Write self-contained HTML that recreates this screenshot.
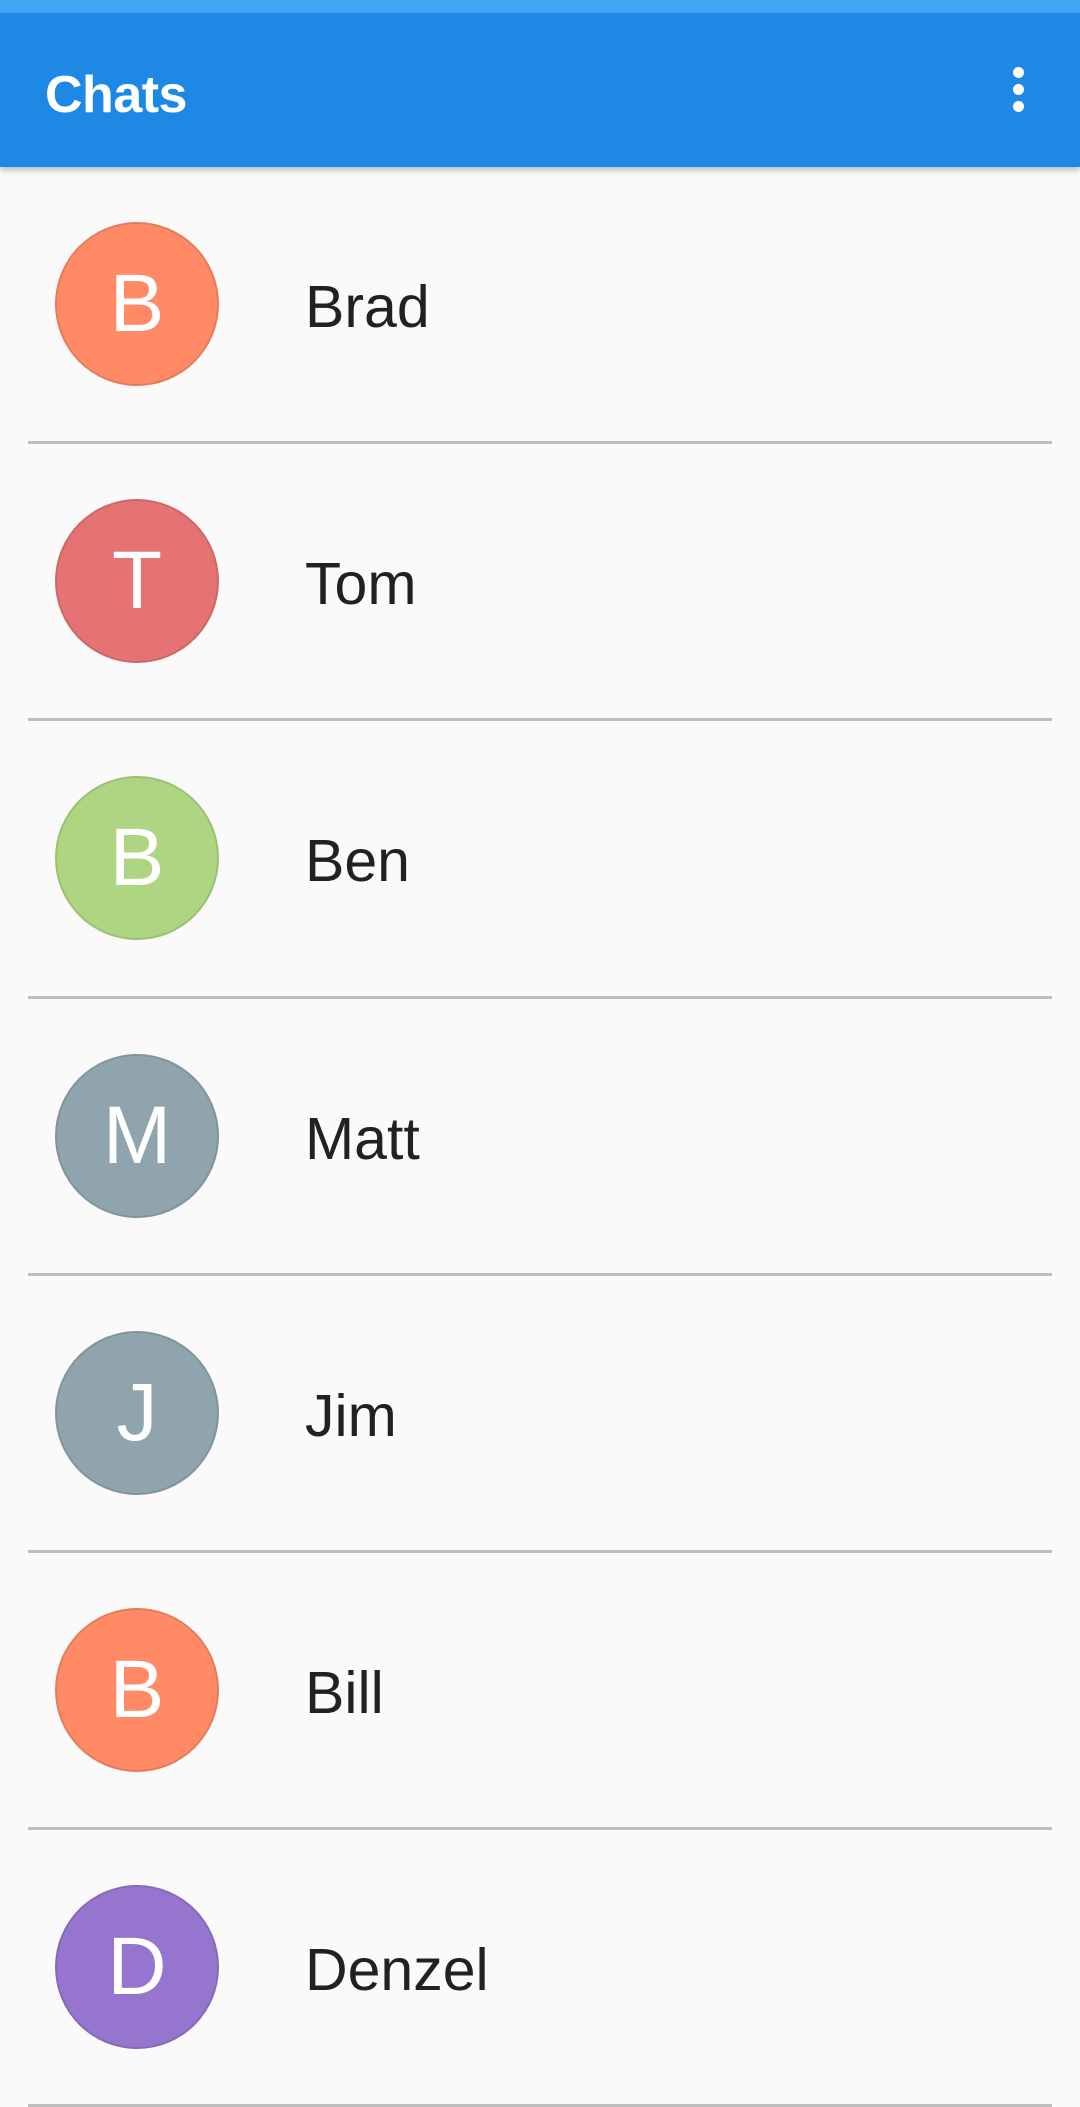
<!DOCTYPE html>
<html><head><meta charset="utf-8"><style>
*{margin:0;padding:0;box-sizing:border-box}
body{width:1080px;height:2107px;background:#fafafa;font-family:"Liberation Sans",sans-serif;overflow:hidden;position:relative}
.status{position:absolute;left:0;top:0;width:1080px;height:13px;background:#42a5f5}
.bar{position:absolute;left:0;top:13px;width:1080px;height:154px;background:#1e88e5;box-shadow:0 3px 6px rgba(0,0,0,0.25);z-index:2}
.title{position:absolute;left:45px;top:52px;color:#fff;font-size:52px;font-weight:bold;line-height:60px;letter-spacing:-0.5px}
.dot{position:absolute;left:1013px;width:11px;height:11px;border-radius:50%;background:#fff}
.list{position:absolute;left:0;top:167px;width:1080px}
.row{position:relative;height:277.2px}
.av{position:absolute;left:55px;top:55px;width:164px;height:164px;border-radius:50%;border:2px solid rgba(0,0,0,0.1);color:#fff;font-size:82px;text-align:center;line-height:160px;font-weight:normal}
.name{position:absolute;left:305px;top:105px;font-size:59px;line-height:70px;color:#212121}
.div{position:absolute;left:28px;right:28px;bottom:0;height:3px;background:#bdbdbd}
</style></head><body>
<div class="status"></div>
<div class="bar"><div class="title">Chats</div>
<div class="dot" style="top:54px"></div><div class="dot" style="top:71px"></div><div class="dot" style="top:88px"></div></div>
<div class="list">
<div class="row"><div class="av" style="background:#ff8a65">B</div><div class="name">Brad</div><div class="div"></div></div>
<div class="row"><div class="av" style="background:#e57373">T</div><div class="name">Tom</div><div class="div"></div></div>
<div class="row"><div class="av" style="background:#aed581">B</div><div class="name">Ben</div><div class="div"></div></div>
<div class="row"><div class="av" style="background:#90a4ae">M</div><div class="name">Matt</div><div class="div"></div></div>
<div class="row"><div class="av" style="background:#90a4ae">J</div><div class="name">Jim</div><div class="div"></div></div>
<div class="row"><div class="av" style="background:#ff8a65">B</div><div class="name">Bill</div><div class="div"></div></div>
<div class="row"><div class="av" style="background:#9575cd">D</div><div class="name">Denzel</div><div class="div"></div></div>
</div>
</body></html>
